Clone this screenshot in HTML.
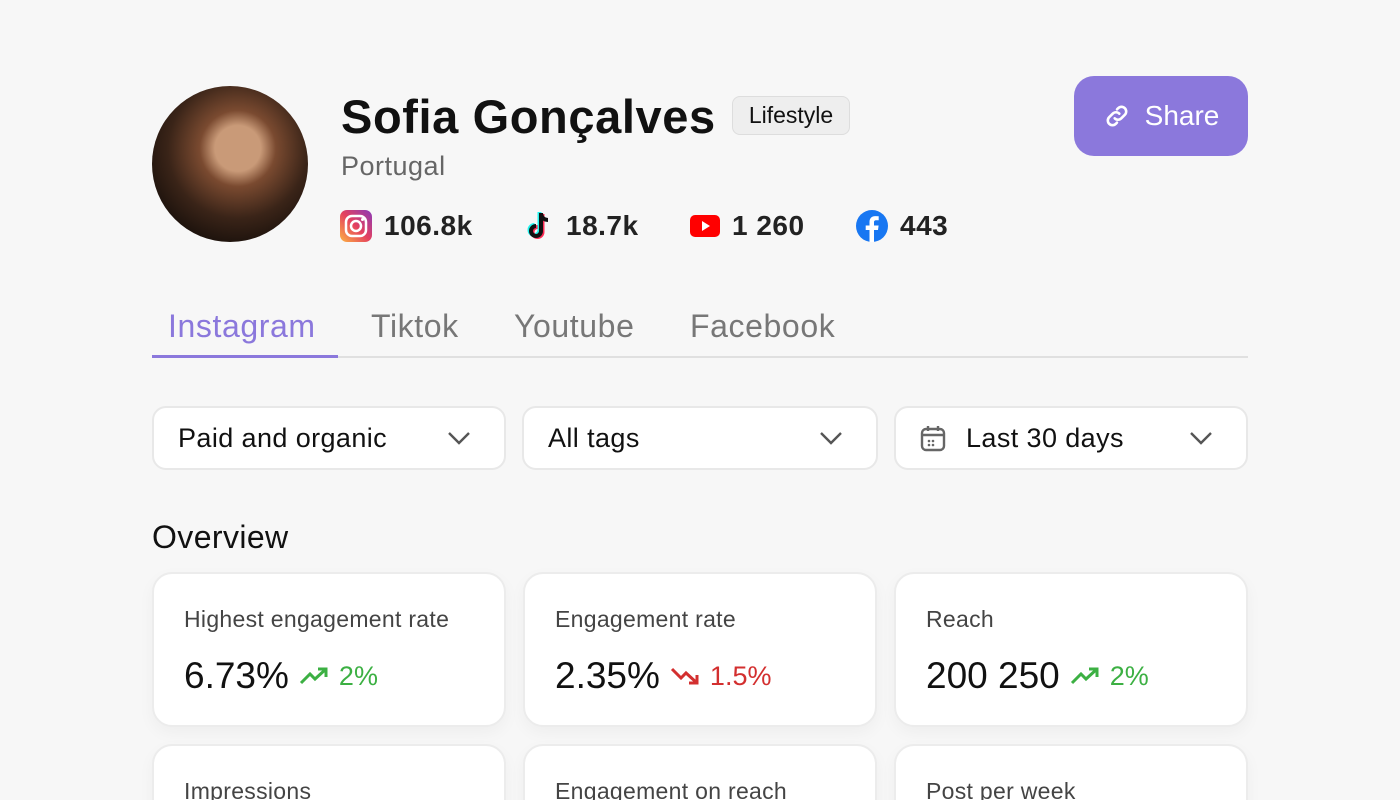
<!DOCTYPE html>
<html><head><meta charset="utf-8"><style>
*{box-sizing:border-box;margin:0;padding:0}
html,body{width:1400px;height:800px;overflow:hidden}
body{background:#f7f7f7;font-family:"Liberation Sans",sans-serif;color:#111;position:relative}
.abs{position:absolute}
.avatar{left:152px;top:86px;width:156px;height:156px;border-radius:50%;background:radial-gradient(circle at 55% 40%,#c99a78 0 18%,#7a4a30 30%,#3a2418 55%,#1e130d 75%);overflow:hidden}
.name{left:341px;top:89px;font-size:47px;font-weight:bold;letter-spacing:0.6px}
.badge{left:732px;top:96px;width:118px;height:39px;border:1px solid #ddd;background:#eee;border-radius:8px;font-size:23px;line-height:37px;text-align:center}
.country{left:341px;top:151px;font-size:27px;color:#666;letter-spacing:0.5px}
.stat{top:210px;font-size:28px;font-weight:bold;color:#222;display:flex;align-items:center;gap:12px;letter-spacing:0.5px}
.share{left:1074px;top:76px;width:174px;height:80px;border-radius:20px;background:#8b78dc;color:#fff;font-size:28px;display:flex;align-items:center;justify-content:center;gap:14px}
.tab{top:308px;font-size:32px;color:#777;letter-spacing:0.6px}
.tabline{left:152px;top:356px;width:1096px;height:2px;background:#e0e0e0}
.dd{top:406px;height:64px;width:354px;background:#fff;border:2px solid #e8e8e8;border-radius:14px;font-size:27px;display:flex;align-items:center;padding:0 32px 0 24px;letter-spacing:0.4px}
.dd .chev{margin-left:auto}
.card{top:572px;width:354px;height:155px;background:#fff;border:2px solid #ececec;border-radius:20px;padding:32px 30px;box-shadow:0 6px 16px rgba(0,0,0,.04)}
.card .l{font-size:23px;color:#444;letter-spacing:0.3px}
.card .v{margin-top:22px;font-size:37px;display:flex;align-items:center;gap:10px}
.card .v span{font-size:27px}
.card2{top:744px}
</style></head><body>
<div class="abs avatar"></div>
<div class="abs name">Sofia Gonçalves</div>
<div class="abs badge">Lifestyle</div>
<div class="abs country">Portugal</div>
<div class="abs stat" style="left:340px"><svg width="32" height="32" viewBox="0 0 32 32"><defs><linearGradient id="ig" x1="0" y1="1" x2="1" y2="0"><stop offset="0" stop-color="#fdb342"/><stop offset=".5" stop-color="#e4405f"/><stop offset="1" stop-color="#8a3ab9"/></linearGradient></defs><rect width="32" height="32" rx="7" fill="url(#ig)"/><rect x="6" y="6" width="20" height="20" rx="6" fill="none" stroke="#fff" stroke-width="2.5"/><circle cx="16" cy="16" r="5" fill="none" stroke="#fff" stroke-width="2.5"/><circle cx="22.5" cy="9.5" r="1.5" fill="#fff"/></svg>106.8k</div>
<div class="abs stat" style="left:526px"><svg width="28" height="32" viewBox="0 0 28 32"><path d="M15 3v18a5 5 0 1 1-5-5" fill="none" stroke="#25f4ee" stroke-width="4" transform="translate(-1.5,-1)"/><path d="M15 3v18a5 5 0 1 1-5-5" fill="none" stroke="#fe2c55" stroke-width="4" transform="translate(1.5,1)"/><path d="M15 3v18a5 5 0 1 1-5-5M15 3c0 4 3 7 7 7" fill="none" stroke="#111" stroke-width="4"/></svg>18.7k</div>
<div class="abs stat" style="left:690px"><svg width="30" height="22" viewBox="0 0 30 22"><rect width="30" height="22" rx="5" fill="#f00"/><path d="M12 6l8 5-8 5z" fill="#fff"/></svg>1 260</div>
<div class="abs stat" style="left:856px"><svg width="32" height="32" viewBox="0 0 32 32"><circle cx="16" cy="16" r="16" fill="#1877f2"/><path d="M18 32V20h4l.6-4.5H18v-3c0-1.3.4-2.2 2.3-2.2h2.4v-4a30 30 0 0 0-3.5-.2c-3.4 0-5.7 2.1-5.7 5.9v3.5H9.7V20h3.8v12z" fill="#fff"/></svg>443</div>
<div class="abs share"><svg width="28" height="28" viewBox="0 0 24 24" fill="none" stroke="#fff" stroke-width="2.2" stroke-linecap="round"><path d="M10 14a4 4 0 0 0 5.7 0l3-3a4 4 0 0 0-5.7-5.7l-1 1"/><path d="M14 10a4 4 0 0 0-5.7 0l-3 3a4 4 0 0 0 5.7 5.7l1-1"/></svg>Share</div>
<div class="abs tab" style="left:168px;color:#8b78dc">Instagram</div>
<div class="abs tab" style="left:371px">Tiktok</div>
<div class="abs tab" style="left:514px">Youtube</div>
<div class="abs tab" style="left:690px">Facebook</div>
<div class="abs tabline"></div>
<div class="abs" style="left:152px;top:355px;width:186px;height:3px;background:#8b78dc"></div>
<div class="abs dd" style="left:152px">Paid and organic<svg class="chev" width="26" height="16" viewBox="0 0 26 16"><path d="M3 3l10 10 10-10" fill="none" stroke="#555" stroke-width="2.4"/></svg></div>
<div class="abs dd" style="left:522px;width:356px">All tags<svg class="chev" width="26" height="16" viewBox="0 0 26 16"><path d="M3 3l10 10 10-10" fill="none" stroke="#555" stroke-width="2.4"/></svg></div>
<div class="abs dd" style="left:894px"><svg width="26" height="28" viewBox="0 0 26 28" style="margin-right:20px"><rect x="2" y="5" width="22" height="21" rx="4" fill="none" stroke="#666" stroke-width="2.4"/><path d="M2 11h22M8 2v5M18 2v5" stroke="#666" stroke-width="2.4"/><circle cx="9" cy="17" r="1.3" fill="#666"/><circle cx="13" cy="17" r="1.3" fill="#666"/><circle cx="9" cy="21" r="1.3" fill="#666"/><circle cx="13" cy="21" r="1.3" fill="#666"/></svg>Last 30 days<svg class="chev" width="26" height="16" viewBox="0 0 26 16"><path d="M3 3l10 10 10-10" fill="none" stroke="#555" stroke-width="2.4"/></svg></div>
<div class="abs" style="left:152px;top:519px;font-size:32px;letter-spacing:0.4px">Overview</div>
<div class="abs card" style="left:152px"><div class="l">Highest engagement rate</div><div class="v">6.73%<svg width="30" height="20" viewBox="0 0 30 20"><path d="M2 17l9-9 5 5 11-10M19 3h8v8" fill="none" stroke="#3cb043" stroke-width="3"/></svg><span style="color:#3cb043">2%</span></div></div>
<div class="abs card" style="left:523px"><div class="l">Engagement rate</div><div class="v">2.35%<svg width="30" height="20" viewBox="0 0 30 20"><path d="M2 3l9 9 5-5 11 10M19 17h8V9" fill="none" stroke="#d32f2f" stroke-width="3"/></svg><span style="color:#d32f2f">1.5%</span></div></div>
<div class="abs card" style="left:894px"><div class="l">Reach</div><div class="v">200 250<svg width="30" height="20" viewBox="0 0 30 20"><path d="M2 17l9-9 5 5 11-10M19 3h8v8" fill="none" stroke="#3cb043" stroke-width="3"/></svg><span style="color:#3cb043">2%</span></div></div>
<div class="abs card card2" style="left:152px"><div class="l">Impressions</div></div>
<div class="abs card card2" style="left:523px"><div class="l">Engagement on reach</div></div>
<div class="abs card card2" style="left:894px"><div class="l">Post per week</div></div>
</body></html>
